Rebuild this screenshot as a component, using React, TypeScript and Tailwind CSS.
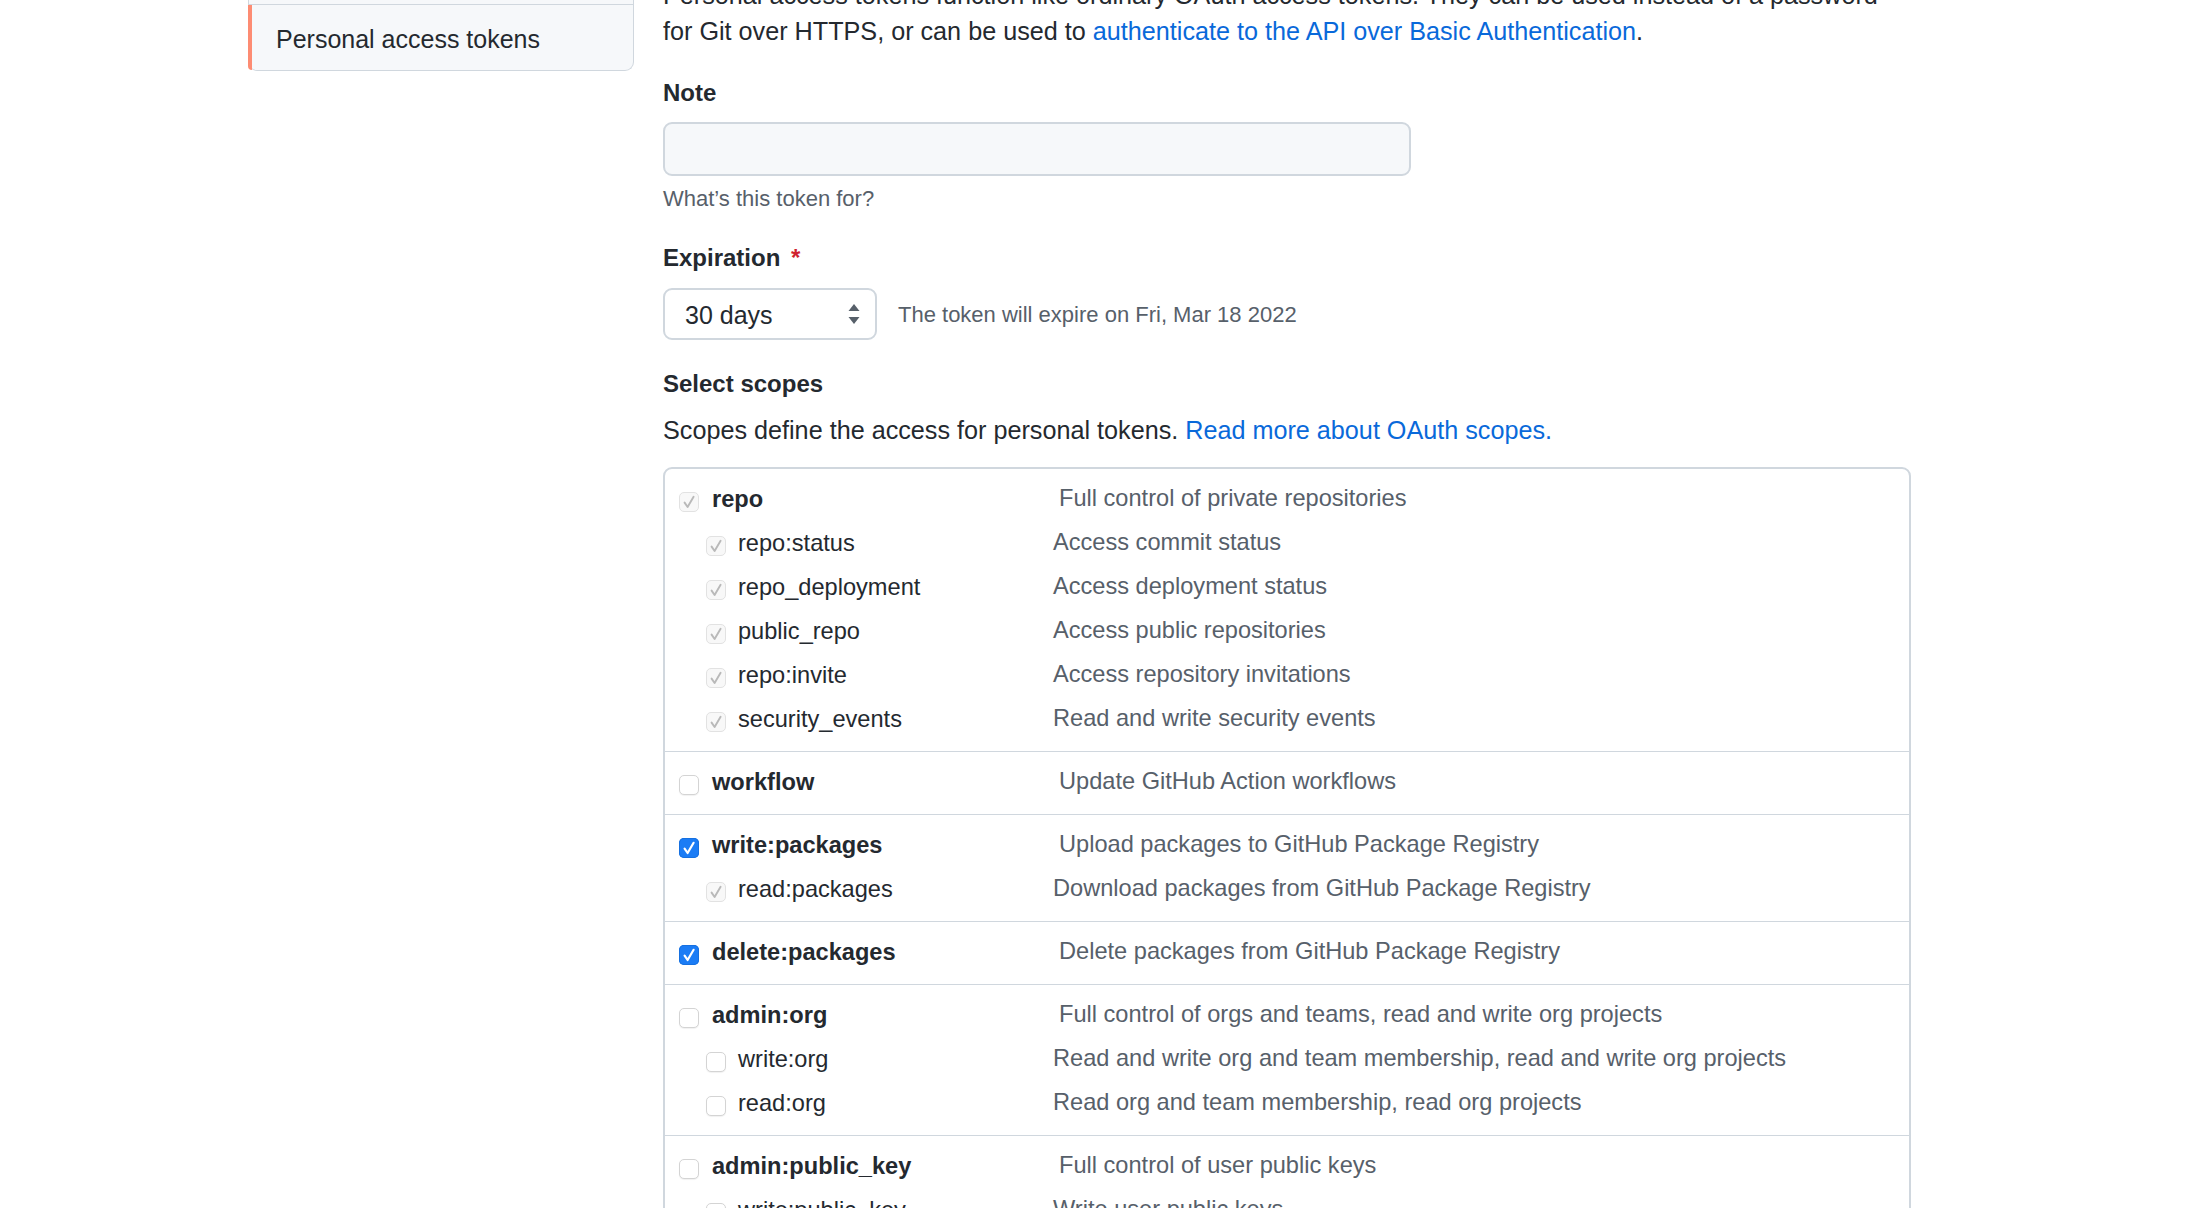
import React from "react";

type CheckState = "on" | "off" | "implied";

type Scope = {
  name: string;
  desc: string;
  state: CheckState;
  children?: { name: string; desc: string; state: CheckState }[];
};

const scopes: Scope[] = [
  {
    name: "repo",
    desc: "Full control of private repositories",
    state: "implied",
    children: [
      { name: "repo:status", desc: "Access commit status", state: "implied" },
      { name: "repo_deployment", desc: "Access deployment status", state: "implied" },
      { name: "public_repo", desc: "Access public repositories", state: "implied" },
      { name: "repo:invite", desc: "Access repository invitations", state: "implied" },
      { name: "security_events", desc: "Read and write security events", state: "implied" },
    ],
  },
  { name: "workflow", desc: "Update GitHub Action workflows", state: "off" },
  {
    name: "write:packages",
    desc: "Upload packages to GitHub Package Registry",
    state: "on",
    children: [
      { name: "read:packages", desc: "Download packages from GitHub Package Registry", state: "implied" },
    ],
  },
  { name: "delete:packages", desc: "Delete packages from GitHub Package Registry", state: "on" },
  {
    name: "admin:org",
    desc: "Full control of orgs and teams, read and write org projects",
    state: "off",
    children: [
      { name: "write:org", desc: "Read and write org and team membership, read and write org projects", state: "off" },
      { name: "read:org", desc: "Read org and team membership, read org projects", state: "off" },
    ],
  },
  {
    name: "admin:public_key",
    desc: "Full control of user public keys",
    state: "off",
    children: [
      { name: "write:public_key", desc: "Write user public keys", state: "off" },
      { name: "read:public_key", desc: "Read user public keys", state: "off" },
    ],
  },
];

function Checkbox({ state }: { state: CheckState }) {
  if (state === "on") {
    return (
      <span className="mt-[4px] flex h-[20px] w-[20px] shrink-0 items-center justify-center rounded-[5px] bg-[#1b7cf5] shadow-[inset_0_0_0_1px_#1670e0]">
        <svg width="16" height="16" viewBox="0 0 16 16">
          <path d="M3.6 8.6 L6.6 13 L12.6 2.8" fill="none" stroke="#fff" strokeWidth="2.2" strokeLinecap="round" strokeLinejoin="round" />
        </svg>
      </span>
    );
  }
  if (state === "implied") {
    return (
      <span className="mt-[4px] flex h-[20px] w-[20px] shrink-0 items-center justify-center rounded-[5px] border border-[#e2e2e2] bg-[#f8f8f8]">
        <svg width="16" height="16" viewBox="0 0 16 16">
          <path d="M3.6 8.6 L6.6 13 L12.6 2.8" fill="none" stroke="#b9b9b9" strokeWidth="1.9" strokeLinecap="round" strokeLinejoin="round" />
        </svg>
      </span>
    );
  }
  return (
    <span className="mt-[4px] block h-[20px] w-[20px] shrink-0 rounded-[5px] border border-[#d4d4d4] bg-white shadow-[0_1px_1px_rgba(0,0,0,0.06)]" />
  );
}

function ScopeGroup({ scope, first }: { scope: Scope; first: boolean }) {
  return (
    <div className={`py-[9px] ${first ? "" : "border-t border-[#d0d7de]"}`}>
      <div className="flex h-[44px] items-center pl-[14px]">
        <Checkbox state={scope.state} />
        <span className="ml-[13px] w-[347px] shrink-0 font-bold text-[#24292f]">{scope.name}</span>
        <span className="-mt-[3px] text-[#57606a]">{scope.desc}</span>
      </div>
      {scope.children?.map((c) => (
        <div key={c.name} className="flex h-[44px] items-center pl-[41px]">
          <Checkbox state={c.state} />
          <span className="ml-[12px] w-[315px] shrink-0 text-[#24292f]">{c.name}</span>
          <span className="-mt-[3px] text-[#57606a]">{c.desc}</span>
        </div>
      ))}
    </div>
  );
}

export default function App() {
  return (
    <div className="min-h-screen overflow-hidden bg-white font-['Liberation_Sans',Arial,sans-serif] text-[#24292f]">
      <div className="flex items-start pl-[248px]">
        {/* sidebar, scrolled so only the last item shows */}
        <nav className="-mt-[128px] w-[386px] shrink-0 rounded-b-[9px] border border-t-0 border-[#d0d7de] bg-[#f6f8fa]">
          <div className="flex h-[66px] items-center px-[27px] text-[25px]">GitHub Apps</div>
          <div className="flex h-[66px] items-center border-t border-[#d0d7de] px-[27px] text-[25px]">OAuth Apps</div>
          <div className="relative flex h-[66px] items-center border-t border-[#d0d7de] px-[27px] pt-[4px] text-[25px]">
            <span className="absolute -left-px top-0 bottom-0 w-[4px] rounded-bl-[9px] bg-[#fd8c73]" />
            Personal access tokens
          </div>
        </nav>

        <main className="-mt-[23px] ml-[29px] w-[1248px]">
          <p className="text-[25.2px] leading-[36px]">
            Personal access tokens function like ordinary OAuth access tokens. They can be used instead of a password
            <br />
            for Git over HTTPS, or can be used to{" "}
            <a className="text-[#0969da]">authenticate to the API over Basic Authentication</a>.
          </p>

          <h3 className="mt-[26px] text-[24px] font-bold leading-[36px]">Note</h3>
          <div className="mt-[11px] h-[54px] w-[748px] rounded-[9px] border-2 border-[#d0d7de] bg-[#f6f8fa]" />
          <p className="mt-[6px] text-[22px] leading-[33px] text-[#57606a]">What’s this token for?</p>

          <h3 className="mt-[25px] text-[24px] font-bold leading-[36px]">
            Expiration <span className="ml-[4px] text-[#cf222e]">*</span>
          </h3>
          <div className="mt-[12px] flex items-center">
            <div className="flex h-[52px] w-[214px] items-center justify-between rounded-[9px] border-2 border-[#d0d7de] bg-white pl-[20px] pr-[14px]">
              <span className="mt-[3px] text-[25px]">30 days</span>
              <svg width="14" height="24" viewBox="0 0 14 24">
                <path d="M7 2 L12.5 9 H1.5 Z" fill="#57606a" />
                <path d="M7 22 L12.5 15 H1.5 Z" fill="#57606a" />
              </svg>
            </div>
            <span className="ml-[21px] text-[22px] text-[#57606a]">The token will expire on Fri, Mar 18 2022</span>
          </div>

          <h3 className="mt-[26px] text-[24px] font-bold leading-[36px]">Select scopes</h3>
          <p className="mt-[10px] text-[25.2px] leading-[36px]">
            Scopes define the access for personal tokens.{" "}
            <a className="text-[#0969da]">Read more about OAuth scopes.</a>
          </p>

          <div className="mt-[19px] rounded-[9px] border-2 border-[#d0d7de] text-[23.6px]">
            {scopes.map((s, i) => (
              <ScopeGroup key={s.name} scope={s} first={i === 0} />
            ))}
          </div>
        </main>
      </div>
    </div>
  );
}
